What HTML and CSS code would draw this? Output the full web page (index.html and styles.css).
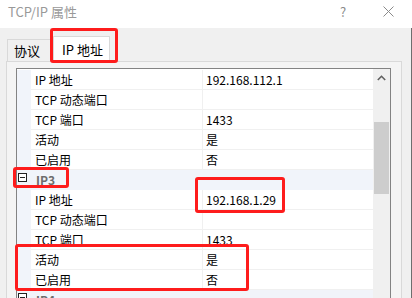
FILE: index.html
```html
<!DOCTYPE html>
<html lang="zh-CN">
<head>
<meta charset="utf-8">
<title>TCP/IP 属性</title>
<link rel="stylesheet" href="styles.css">
</head>
<body>
<div class="window">
  <header class="titlebar">
    <span class="title">TCP/IP 属性</span>
    <span class="help">?</span>
    <span class="close"><svg width="11" height="11" viewBox="0 0 11 11"><path d="M0.5 0.5 L10.5 10.5 M10.5 0.5 L0.5 10.5" stroke="#8a8a8a" stroke-width="1" fill="none"/></svg></span>
  </header>
  <div class="content">
    <div class="tabs">
      <div class="tab">协议</div>
      <div class="tab active">IP 地址</div>
    </div>
    <div class="pane">
      <div class="grid">
        <div class="list">
          <div class="row"><span class="gutter"></span><span class="name">IP 地址</span><span class="value">192.168.112.1</span></div>
          <div class="row"><span class="gutter"></span><span class="name">TCP 动态端口</span><span class="value"></span></div>
          <div class="row"><span class="gutter"></span><span class="name">TCP 端口</span><span class="value">1433</span></div>
          <div class="row"><span class="gutter"></span><span class="name">活动</span><span class="value">是</span></div>
          <div class="row"><span class="gutter"></span><span class="name">已启用</span><span class="value">否</span></div>
          <div class="row category"><span class="gutter"><span class="toggle"></span></span><span class="cat-name">IP3</span></div>
          <div class="row"><span class="gutter"></span><span class="name">IP 地址</span><span class="value">192.168.1.29</span></div>
          <div class="row"><span class="gutter"></span><span class="name">TCP 动态端口</span><span class="value"></span></div>
          <div class="row"><span class="gutter"></span><span class="name">TCP 端口</span><span class="value">1433</span></div>
          <div class="row"><span class="gutter"></span><span class="name">活动</span><span class="value">是</span></div>
          <div class="row"><span class="gutter"></span><span class="name">已启用</span><span class="value">否</span></div>
          <div class="row category"><span class="gutter"><span class="toggle"></span></span><span class="cat-name">IP4</span></div>
        </div>
        <div class="scrollbar">
          <div class="arrow"><svg width="9" height="6" viewBox="0 0 9 6"><path d="M0.8 5 L4.5 1.3 L8.2 5" stroke="#606060" stroke-width="1.6" fill="none"/></svg></div>
          <div class="thumb"></div>
        </div>
      </div>
    </div>
  </div>
  <div class="mark mark-tab"></div>
  <div class="mark mark-cat"></div>
  <div class="mark mark-ip"></div>
  <div class="mark mark-flags"></div>
</div>
</body>
</html>
```

FILE: styles.css
```css
* { box-sizing: border-box; }
html, body { margin: 0; padding: 0; }
body {
  font-family: "Noto Sans CJK SC", "Noto Sans", sans-serif;
  font-size: 12px;
  color: #000;
  background: #f0f0f0;
}
.window {
  position: relative;
  width: 412px;
  height: 298px;
  overflow: hidden;
  background: #f0f0f0;
  display: flex;
  flex-direction: column;
}
.titlebar {
  height: 28px;
  flex: none;
  background: #fff;
  display: flex;
  align-items: flex-start;
  padding: 3px 0 0 8px;
}
.title {
  font-size: 13px;
  color: #999;
  line-height: 18px;
}
.help {
  margin-left: auto;
  font-size: 13px;
  color: #8a8a8a;
  line-height: 18px;
  width: 10px;
}
.close {
  margin-left: 33px;
  margin-right: 18px;
  padding-top: 3px;
  display: flex;
}
.content {
  flex: 1;
  border-right: 1px solid #6e6e6e;
  display: flex;
  flex-direction: column;
}
.tabs {
  height: 33px;
  flex: none;
  display: flex;
  align-items: flex-end;
  padding-left: 7px;
  position: relative;
  z-index: 1;
}
.tab {
  height: 22px;
  width: 47px;
  border: 1px solid #d9d9d9;
  border-bottom: none;
  background: #f0f0f0;
  font-size: 13px;
  display: flex;
  align-items: center;
  padding-left: 6px;
  line-height: 1;
}
.tab.active {
  height: 26px;
  width: 57px;
  margin-left: -1px;
  margin-bottom: -1px;
  background: #fff;
  padding-left: 8px;
}
.pane {
  margin-left: 6px;
  width: 396px;
  flex: 1;
  border: 1px solid #d9d9d9;
  border-bottom: none;
  background: #f4f4f4;
  padding: 6px 10px 0 9px;
}
.grid {
  height: 100%;
  border: 1px solid #838383;
  border-bottom: none;
  display: flex;
}
.list {
  width: 356px;
  background: #fff;
  padding-top: 1px;
}
.row {
  height: 20px;
  display: flex;
  line-height: 19px;
}
.gutter {
  width: 14px;
  flex: none;
  background: #f1f4fa;
}
.name {
  width: 172px;
  flex: none;
  padding-left: 4px;
  border-right: 1px solid #f0f0f0;
  border-bottom: 1px solid #f0f0f0;
  white-space: nowrap;
}
.value {
  flex: 1;
  padding-left: 3px;
  border-bottom: 1px solid #f0f0f0;
  white-space: nowrap;
}
.row.category {
  background: #f1f4fa;
}
.category .gutter {
  padding: 3px 0 0 1px;
}
.toggle {
  display: block;
  width: 9px;
  height: 9px;
  border: 1px solid #222;
  background: #fff;
  position: relative;
}
.toggle::after {
  content: "";
  position: absolute;
  left: 1px;
  top: 3px;
  width: 5px;
  height: 1px;
  background: #222;
}
.cat-name {
  padding-left: 5px;
  font-weight: bold;
  color: #6d6d6d;
}
.scrollbar {
  width: 17px;
  background: #f0f0f0;
  display: flex;
  flex-direction: column;
}
.arrow {
  height: 17px;
  display: flex;
  align-items: center;
  justify-content: center;
}
.thumb {
  margin: 36px 1px 0;
  height: 72px;
  background: #cdcdcd;
}
.mark {
  position: absolute;
  border: 3px solid #fe1c1c;
  border-radius: 3px;
  z-index: 5;
}
.mark-tab { left: 50px; top: 28px; width: 68px; height: 35px; }
.mark-cat { left: 13px; top: 167px; width: 56px; height: 21px; }
.mark-ip { left: 195px; top: 177px; width: 90px; height: 36px; }
.mark-flags { left: 15px; top: 244px; width: 234px; height: 47px; }
```
